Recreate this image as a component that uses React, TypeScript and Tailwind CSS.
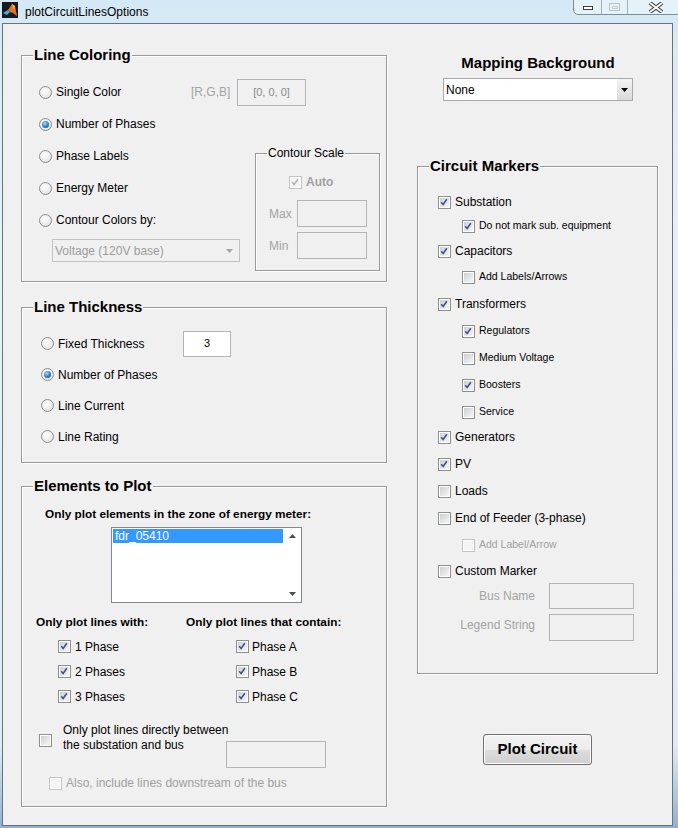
import React from "react";
import clsx from "clsx";

// ---- small Win7-style widgets ----

function Radio({ checked }: { checked?: boolean }) {
  return (
    <span className="relative flex h-[13px] w-[13px] shrink-0 items-center justify-center rounded-full border border-[#8b8b8b] bg-[radial-gradient(circle_at_40%_35%,#ffffff,#dcdcdc)]">
      {checked && (
        <span className="h-[7px] w-[7px] rounded-full bg-[radial-gradient(circle_at_40%_35%,#a6dcff,#2a7cc4_55%,#0e3f74)]" />
      )}
    </span>
  );
}

function Check({ checked, disabled }: { checked?: boolean; disabled?: boolean }) {
  return (
    <span
      className={clsx(
        "relative flex h-[13px] w-[13px] shrink-0 items-center justify-center border bg-white",
        disabled ? "border-[#c4c4c4]" : "border-[#8e8f8f]"
      )}
    >
      <span
        className={clsx(
          "h-[9px] w-[9px]",
          disabled
            ? "bg-[#f4f4f4]"
            : "bg-[linear-gradient(135deg,#cdcfd2,#f6f6f6)]"
        )}
      />
      {checked && (
        <svg viewBox="0 0 13 13" className="absolute left-0 top-0 h-[11px] w-[11px]">
          <path
            d="M2.6 6.2 L4.9 8.8 L9.2 2.6"
            fill="none"
            stroke={disabled ? "#b3b3b3" : "#3d4f8c"}
            strokeWidth="1.8"
          />
        </svg>
      )}
    </span>
  );
}

function Panel({
  title,
  bold = true,
  className,
  children,
}: {
  title: string;
  bold?: boolean;
  className?: string;
  children?: React.ReactNode;
}) {
  return (
    <div
      className={clsx(
        "relative border border-[#9a9a9a] shadow-[inset_1px_1px_0_#ffffff,1px_1px_0_#ffffff]",
        className
      )}
    >
      <span
        className={clsx(
          "absolute left-[11px] top-[-1px] -translate-y-1/2 bg-[#f0f0f0] px-[1px] leading-[18px]",
          bold ? "text-[15px] font-bold" : "text-[12px]"
        )}
      >
        {title}
      </span>
      {children}
    </div>
  );
}

function Field({ className, children }: { className?: string; children?: React.ReactNode }) {
  return (
    <span
      className={clsx(
        "flex shrink-0 items-center justify-center border border-[#b4b4b4]",
        className
      )}
    >
      {children}
    </span>
  );
}

function DownTri({ color = "#000" }: { color?: string }) {
  return (
    <svg width="7" height="4" viewBox="0 0 7 4">
      <path d="M0 0 H7 L3.5 4 Z" fill={color} />
    </svg>
  );
}

function Logo() {
  return (
    <svg width="16" height="16" viewBox="0 0 16 16">
      <rect width="16" height="16" fill="#161b24" />
      <path d="M1 11 L6 8 L8 10 L5 13 Z" fill="#3ab5d9" />
      <path d="M6 8 L10 2 L13 4 L15 14 L11 11 L8 10 Z" fill="#e2742a" />
      <path d="M10 2 L13 4 L12 8 Z" fill="#f6b24a" />
    </svg>
  );
}

const markers = [
  { label: "Substation", sub: false, checked: true, mt: "mt-[28px]" },
  { label: "Do not mark sub. equipment", sub: true, checked: true, mt: "mt-[10px]" },
  { label: "Capacitors", sub: false, checked: true, mt: "mt-[11px]" },
  { label: "Add Labels/Arrows", sub: true, checked: false, mt: "mt-[12px]" },
  { label: "Transformers", sub: false, checked: true, mt: "mt-[13px]" },
  { label: "Regulators", sub: true, checked: true, mt: "mt-[13px]" },
  { label: "Medium Voltage", sub: true, checked: false, mt: "mt-[13px]" },
  { label: "Boosters", sub: true, checked: true, mt: "mt-[13px]" },
  { label: "Service", sub: true, checked: false, mt: "mt-[13px]" },
  { label: "Generators", sub: false, checked: true, mt: "mt-[11px]" },
  { label: "PV", sub: false, checked: true, mt: "mt-[13px]" },
  { label: "Loads", sub: false, checked: false, mt: "mt-[13px]" },
  { label: "End of Feeder (3-phase)", sub: false, checked: false, mt: "mt-[13px]" },
  { label: "Add Label/Arrow", sub: true, checked: false, disabled: true, mt: "mt-[13px]" },
  { label: "Custom Marker", sub: false, checked: false, mt: "mt-[12px]" },
];

export default function App() {
  return (
    <div className="relative h-[828px] w-[678px] overflow-hidden bg-[linear-gradient(180deg,#d4e9f5_0%,#e4f2f9_30%,#dcecf6_90%,#8fb0d6_100%)] font-['Liberation_Sans',Arial,sans-serif] text-black">
      {/* title bar */}
      <div className="flex h-[23px] items-center">
        <span className="mb-[3px] ml-[2px]">
          <Logo />
        </span>
        <span className="ml-[7px] text-[12px]">plotCircuitLinesOptions</span>
      </div>

      {/* caption buttons */}
      <div className="absolute left-[573px] top-[-1px] flex h-[16px] w-[108px] rounded-b-[5px] border border-[#7d8b99] bg-white/40">
        <div className="flex w-[28px] items-center justify-center border-r border-[#a3b0bc]">
          <span className="mt-[2px] h-[4px] w-[10px] border border-[#3b3f45] bg-white" />
        </div>
        <div className="flex w-[26px] items-center justify-center border-r border-[#a3b0bc]">
          <span className="flex h-[8px] w-[11px] items-center justify-center border border-[#b9c2cb]">
            <span className="h-[3px] w-[6px] border border-[#c4ccd4]" />
          </span>
        </div>
        <div className="flex flex-1 items-center justify-start pl-[18px]">
          <svg width="20" height="11" viewBox="0 0 20 11">
            <path d="M4 1 L16 10 M16 1 L4 10" stroke="#3a3f46" strokeWidth="4" />
            <path d="M4 1 L16 10 M16 1 L4 10" stroke="#ffffff" strokeWidth="2" />
          </svg>
        </div>
      </div>

      {/* client area */}
      <div className="ml-[2px] flex h-[803px] w-[671px] border border-[#6c7077] bg-[#f0f0f0] text-[12px]">
        {/* left column */}
        <div className="flex w-[384px] shrink-0 flex-col pl-[18px] pt-[31px]">
          {/* Line Coloring */}
          <Panel title="Line Coloring" className="h-[227px] w-[366px]">
            <div className="flex flex-col pl-[17px] pt-[20px]">
              <div className="flex h-[32px] items-center">
                <div className="flex w-[152px] items-center">
                  <Radio />
                  <span className="ml-[4px]">Single Color</span>
                </div>
                <span className="w-[46px] text-[#a3a3a3]">[R,G,B]</span>
                <Field className="h-[27px] w-[69px] text-[11px] text-[#8a8a8a]">[0, 0, 0]</Field>
              </div>
              <div className="flex">
                <div className="flex w-[216px] flex-col">
                  {["Number of Phases", "Phase Labels", "Energy Meter", "Contour Colors by:"].map(
                    (l, i) => (
                      <div key={l} className="flex h-[32px] items-center">
                        <Radio checked={i === 0} />
                        <span className="ml-[4px]">{l}</span>
                      </div>
                    )
                  )}
                  <div className="ml-[13px] mt-[3px] flex h-[23px] w-[188px] items-center justify-between border border-[#c2c2c2] pl-[2px] pr-[6px] text-[#9c9c9c]">
                    <span>Voltage (120V base)</span>
                    <DownTri color="#a8a8a8" />
                  </div>
                </div>
                <Panel title="Contour Scale" bold={false} className="mt-[45px] h-[118px] w-[125px]">
                  <div className="flex flex-col pt-[21px]">
                    <div className="ml-[33px] flex h-[14px] items-center">
                      <Check checked disabled />
                      <span className="ml-[4px] font-bold text-[#a0a0a0]">Auto</span>
                    </div>
                    <div className="ml-[13px] mt-[11px] flex items-center">
                      <span className="w-[28px] text-[#a3a3a3]">Max</span>
                      <Field className="h-[27px] w-[70px]" />
                    </div>
                    <div className="ml-[13px] mt-[5px] flex items-center">
                      <span className="w-[28px] text-[#a3a3a3]">Min</span>
                      <Field className="h-[27px] w-[70px]" />
                    </div>
                  </div>
                </Panel>
              </div>
            </div>
          </Panel>

          {/* Line Thickness */}
          <Panel title="Line Thickness" className="mt-[25px] h-[156px] w-[366px]">
            <div className="flex flex-col pl-[19px] pt-[20px]">
              <div className="flex h-[31px] items-center">
                <div className="flex w-[142px] items-center">
                  <Radio />
                  <span className="ml-[4px]">Fixed Thickness</span>
                </div>
                <Field className="h-[26px] w-[48px] border-[#abadb3] bg-white text-[11px]">3</Field>
              </div>
              {["Number of Phases", "Line Current", "Line Rating"].map((l, i) => (
                <div key={l} className="flex h-[31px] items-center">
                  <Radio checked={i === 0} />
                  <span className="ml-[4px]">{l}</span>
                </div>
              ))}
            </div>
          </Panel>

          {/* Elements to Plot */}
          <Panel title="Elements to Plot" className="mt-[23px] h-[321px] w-[366px]">
            <div className="flex flex-col pt-[20px]">
              <div className="ml-[23px] h-[14px] text-[11.8px] font-bold leading-[14px]">
                Only plot elements in the zone of energy meter:
              </div>
              <div className="ml-[89px] mt-[6px] flex h-[76px] w-[191px] border border-[#828790] bg-white">
                <div className="flex-1 p-px">
                  <div className="flex h-[14px] items-center bg-[#3399ff] pl-[2px] leading-[14px] text-white">
                    fdr_05410
                  </div>
                </div>
                <div className="flex w-[17px] flex-col items-center justify-between py-[6px]">
                  <span className="rotate-180">
                    <DownTri color="#4d4d4d" />
                  </span>
                  <DownTri color="#4d4d4d" />
                </div>
              </div>
              <div className="mt-[12px] flex h-[14px] text-[11.8px] font-bold leading-[14px]">
                <span className="ml-[14px] w-[150px]">Only plot lines with:</span>
                <span>Only plot lines that contain:</span>
              </div>
              <div className="mt-[5px] flex flex-col">
                {[
                  ["1 Phase", "Phase A"],
                  ["2 Phases", "Phase B"],
                  ["3 Phases", "Phase C"],
                ].map(([a, b]) => (
                  <div key={a} className="flex h-[25px] items-center">
                    <div className="ml-[36px] flex w-[178px] items-center">
                      <Check checked />
                      <span className="ml-[4px]">{a}</span>
                    </div>
                    <Check checked />
                    <span className="ml-[3px]">{b}</span>
                  </div>
                ))}
              </div>
              <div className="mt-[14px] flex items-start">
                <span className="ml-[17px] mt-[11px]">
                  <Check />
                </span>
                <div className="ml-[11px] w-[163px] whitespace-nowrap leading-[15px]">
                  <div>Only plot lines directly between</div>
                  <div>the substation and bus</div>
                </div>
                <Field className="mt-[18px] h-[27px] w-[100px]" />
              </div>
              <div className="ml-[27px] mt-[8px] flex h-[14px] items-center">
                <Check disabled />
                <span className="ml-[4px] text-[#a0a0a0]">
                  Also, include lines downstream of the bus
                </span>
              </div>
            </div>
          </Panel>
        </div>

        {/* right column */}
        <div className="flex flex-col pl-[30px] pt-[30px]">
          <div className="ml-[26px] w-[190px] text-center text-[15px] font-bold leading-[18px]">
            Mapping Background
          </div>
          <div className="ml-[26px] mt-[6px] flex h-[23px] w-[190px] items-center border border-[#a9a9a9] bg-white">
            <span className="flex-1 pl-[2px]">None</span>
            <span className="flex h-full w-[15px] items-center justify-center bg-[linear-gradient(180deg,#f4f4f4,#d9d9d9)]">
              <DownTri />
            </span>
          </div>

          <Panel title="Circuit Markers" className="mt-[65px] h-[508px] w-[241px]">
            <div className="flex flex-col">
              {markers.map((m) => (
                <div
                  key={m.label}
                  className={clsx("flex h-[14px] items-center", m.mt, m.sub ? "ml-[44px]" : "ml-[20px]")}
                >
                  <Check checked={m.checked} disabled={m.disabled} />
                  <span
                    className={clsx(
                      "ml-[4px]",
                      m.sub ? "text-[10.5px]" : "text-[12px]",
                      m.disabled && "text-[#a0a0a0]"
                    )}
                  >
                    {m.label}
                  </span>
                </div>
              ))}
              <div className="mt-[5px] flex items-center">
                <span className="w-[117px] text-right text-[#a3a3a3]">Bus Name</span>
                <Field className="ml-[14px] h-[26px] w-[85px]" />
              </div>
              <div className="mt-[5px] flex items-center">
                <span className="mb-[6px] w-[117px] text-right text-[#a3a3a3]">Legend String</span>
                <Field className="ml-[14px] h-[27px] w-[85px]" />
              </div>
            </div>
          </Panel>

          <button className="ml-[66px] mt-[60px] h-[31px] w-[109px] rounded-[3px] border border-[#707070] bg-[linear-gradient(180deg,#f2f2f2_0%,#ebebeb_50%,#dddddd_51%,#cfcfcf_100%)] text-[15px] font-bold shadow-[inset_0_0_0_1px_#fcfcfc]">
            Plot Circuit
          </button>
        </div>
      </div>
    </div>
  );
}
